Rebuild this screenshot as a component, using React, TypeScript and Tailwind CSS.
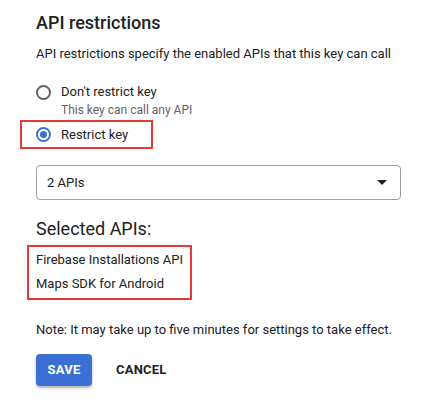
import React from "react";

function Radio({ checked }: { checked?: boolean }) {
  return (
    <span
      className={`flex h-[15px] w-[15px] shrink-0 items-center justify-center rounded-full border-2 ${
        checked ? "border-[#3b6fd4]" : "border-[#5f6368]"
      }`}
    >
      {checked && <span className="h-[7px] w-[7px] rounded-full bg-[#3b6fd4]" />}
    </span>
  );
}

export default function App() {
  return (
    <div className="h-[405px] w-[434px] bg-white font-['Roboto',sans-serif] text-[#202124]">
      <div className="pl-[36px] pr-[33px] pt-[11px]">
        <h2 className="text-[18px] font-medium leading-[24px]">API restrictions</h2>
        <p className="mt-[10px] text-[13px] leading-[18px]">
          API restrictions specify the enabled APIs that this key can call
        </p>

        <div className="mt-[20px] flex items-center gap-[10px]">
          <Radio />
          <span className="text-[13px] leading-[18px]">Don't restrict key</span>
        </div>
        <p className="ml-[25px] text-[12px] leading-[18px] text-[#5f6368]">This key can call any API</p>

        <div className="-ml-[16px] mt-[1px] flex h-[29px] w-[133px] items-center gap-[10px] border-2 border-[#e53935] pl-[14px]">
          <Radio checked />
          <span className="text-[13px] leading-[18px]">Restrict key</span>
        </div>

        <div className="mt-[16px] flex h-[35px] items-center justify-between rounded-[4px] border border-[#9aa0a6] pl-[10px] pr-[13px]">
          <span className="text-[13px]">2 APIs</span>
          <svg width="10" height="5" viewBox="0 0 10 5">
            <path d="M0 0h10L5 5z" fill="#202124" />
          </svg>
        </div>

        <h3 className="mt-[17px] text-[18px] leading-[24px]">Selected APIs:</h3>

        <div className="-ml-[9px] mt-[4px] w-[165px] border-2 border-[#e53935] pb-[2px] pt-[1px] pl-[7px]">
          <p className="text-[13px] leading-[24px]">Firebase Installations API</p>
          <p className="text-[13px] leading-[24px]">Maps SDK for Android</p>
        </div>

        <p className="mt-[21px] text-[13px] leading-[18px]">
          Note: It may take up to five minutes for settings to take effect.
        </p>

        <div className="mt-[15px] flex items-center gap-[8px]">
          <button className="h-[32px] w-[56px] rounded-[4px] bg-[#3b6fd4] text-[13px] font-bold tracking-[0.2px] text-white shadow-[0_2px_3px_rgba(0,0,0,0.3)]">
            SAVE
          </button>
          <button className="h-[32px] px-[16px] text-[13px] font-bold tracking-[0.2px] text-[#202124]">
            CANCEL
          </button>
        </div>
      </div>
    </div>
  );
}
